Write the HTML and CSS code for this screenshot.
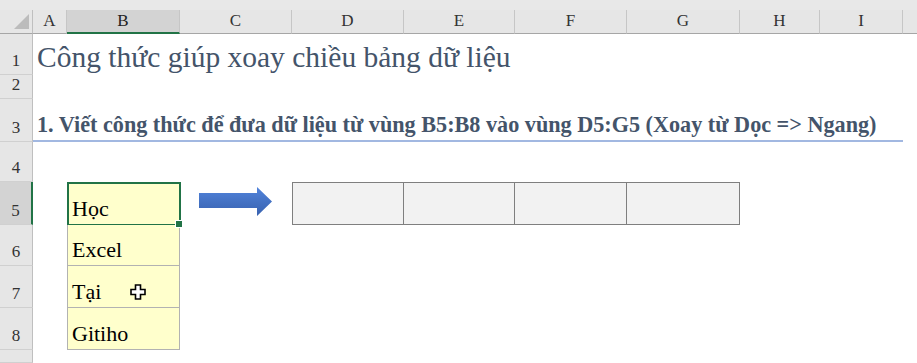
FILE: index.html
```html
<!DOCTYPE html>
<html>
	<head>
		<meta charset="utf-8" />
		<title>Xoay chiều bảng dữ liệu</title>
		<link rel="stylesheet" href="styles.css">
	</head>
	<body>
		<!--bảng tính-->
		<div class="sheet">
			<div class="topband"></div>
			<!--tiêu đề cột-->
			<div class="row head">
				<div class="corner"><span class="tri"></span></div>
				<div class="ch">A</div>
				<div class="ch sel">B</div>
				<div class="ch">C</div>
				<div class="ch">D</div>
				<div class="ch">E</div>
				<div class="ch">F</div>
				<div class="ch">G</div>
				<div class="ch">H</div>
				<div class="ch">I</div>
				<div class="ch last"></div>
			</div>
			<div class="row r1">
				<div class="rh">1</div>
				<div class="cell title">Công thức giúp xoay chiều bảng dữ liệu</div>
			</div>
			<div class="row r2">
				<div class="rh">2</div>
			</div>
			<div class="row r3">
				<div class="rh">3</div>
				<div class="cell heading">1. Viết công thức để đưa dữ liệu từ vùng B5:B8 vào vùng D5:G5 (Xoay từ Dọc =&gt; Ngang)</div>
			</div>
			<div class="row r4">
				<div class="rh">4</div>
			</div>
			<div class="row r5">
				<div class="rh sel">5</div>
				<div class="cell note first active">Học</div>
				<div class="cell arrow">
					<svg width="74" height="29" viewBox="0 0 74 29">
						<defs>
							<linearGradient id="blue" x1="0" y1="0" x2="0" y2="1">
								<stop offset="0" stop-color="#5284dc"/>
								<stop offset="0.5" stop-color="#4472c4"/>
								<stop offset="1" stop-color="#3862b0"/>
							</linearGradient>
						</defs>
						<polygon points="0,6 58,6 58,0 73,14.5 58,29 58,21 0,21" fill="url(#blue)"/>
					</svg>
				</div>
				<div class="cell box d">&nbsp;</div>
				<div class="cell box">&nbsp;</div>
				<div class="cell box">&nbsp;</div>
				<div class="cell box">&nbsp;</div>
			</div>
			<div class="row r6">
				<div class="rh">6</div>
				<div class="cell note">Excel</div>
			</div>
			<div class="row r7">
				<div class="rh">7</div>
				<div class="cell note">Tại
					<!--con trỏ chuột-->
					<svg class="pointer" width="17" height="17" viewBox="0 0 17 17">
						<polygon points="5.5,1 10.5,1 10.5,5.5 15,5.5 15,10.5 10.5,10.5 10.5,15 5.5,15 5.5,10.5 1,10.5 1,5.5 5.5,5.5" fill="#fff" stroke="#000" stroke-width="1.6"/>
					</svg>
				</div>
			</div>
			<div class="row r8">
				<div class="rh">8</div>
				<div class="cell note">Gitiho</div>
			</div>
			<div class="row r9">
				<div class="rh"></div>
			</div>
		</div>
	</body>
</html>
```

FILE: styles.css
```css
*{margin: 0;padding: 0;box-sizing: border-box;}
html,body{width: 917px;height: 363px;overflow: hidden;background: #fff;}
body{font-family: "Liberation Serif", "Times New Roman", serif;color: #000;}
/*khung*/
.sheet{width: 917px;height: 363px;overflow: hidden;}
.topband{height: 10px;background: #e8e8e8;}
.row{display: grid;grid-template-columns: 33px 34px 113px 112px 112px 111px 112px 113px 80px 83px 1fr;}
/*tiêu đề cột*/
.head{height: 23px;background: #e6e6e6;}
.corner{position: relative;border-right: 1px solid #bfbfbf;border-bottom: 1px solid #a6a6a6;}
.tri{position: absolute;right: 3px;bottom: 4px;width: 0;height: 0;border-left: 15px solid transparent;border-bottom: 15px solid #bcbcbc;}
.ch{font-size: 17px;color: #333;text-align: center;line-height: 22px;border-right: 1px solid #c6c6c6;border-bottom: 1px solid #a6a6a6;}
.ch.sel{background: #d3d3d3;border-bottom: 2px solid #217346;color: #222;}
.ch.last{border-right: none;}
/*tiêu đề hàng*/
.rh{background: #e6e6e6;border-right: 1px solid #bfbfbf;border-bottom: 1px solid #d0d0d0;font-size: 17px;color: #333;text-align: center;display: flex;align-items: flex-end;justify-content: center;padding-bottom: 5px;line-height: 17px;}
.rh.sel{background: #d3d3d3;border-right: 2px solid #217346;}
.r1{height: 42px;}
.r2{height: 24px;}
.r3{height: 43px;}
.r4{height: 40px;}
.r5{height: 43px;}
.r6{height: 41px;}
.r7{height: 42px;}
.r8{height: 42px;}
.r9{height: 13px;}
/*ô*/
.cell{display: flex;align-items: flex-end;white-space: nowrap;padding-left: 4px;}
.title{grid-column: 2 / -1;font-size: 29.5px;line-height: 30px;color: #44546a;padding-bottom: 3px;}
.heading{grid-column: 2 / 11;font-size: 22.2px;font-weight: bold;line-height: 22px;color: #44546a;padding-left: 4px;padding-bottom: 4px;border-bottom: 2px solid #a2b8e1;}
.note{grid-column: 3;position: relative;background: #ffffcc;border: 1px solid #b2b2b2;border-top: none;font-size: 22px;line-height: 22px;padding-bottom: 4px;}
.note.first{border-top: 1px solid #b2b2b2;}
.active::after{content: "";position: absolute;left: -1px;top: -1px;right: -2px;bottom: -2px;border: 2px solid #217346;}
.active::before{content: "";position: absolute;right: -4px;bottom: -4px;width: 6px;height: 6px;background: #217346;border: 1px solid #fff;z-index: 1;}
.arrow{grid-column: 4;align-items: flex-start;padding-left: 19px;padding-top: 5px;}
.box{background: #f2f2f2;border: 1px solid #7f7f7f;border-left: none;}
.box.d{grid-column: 5;border-left: 1px solid #7f7f7f;}
.pointer{position: absolute;left: 62px;top: 18px;}
```
